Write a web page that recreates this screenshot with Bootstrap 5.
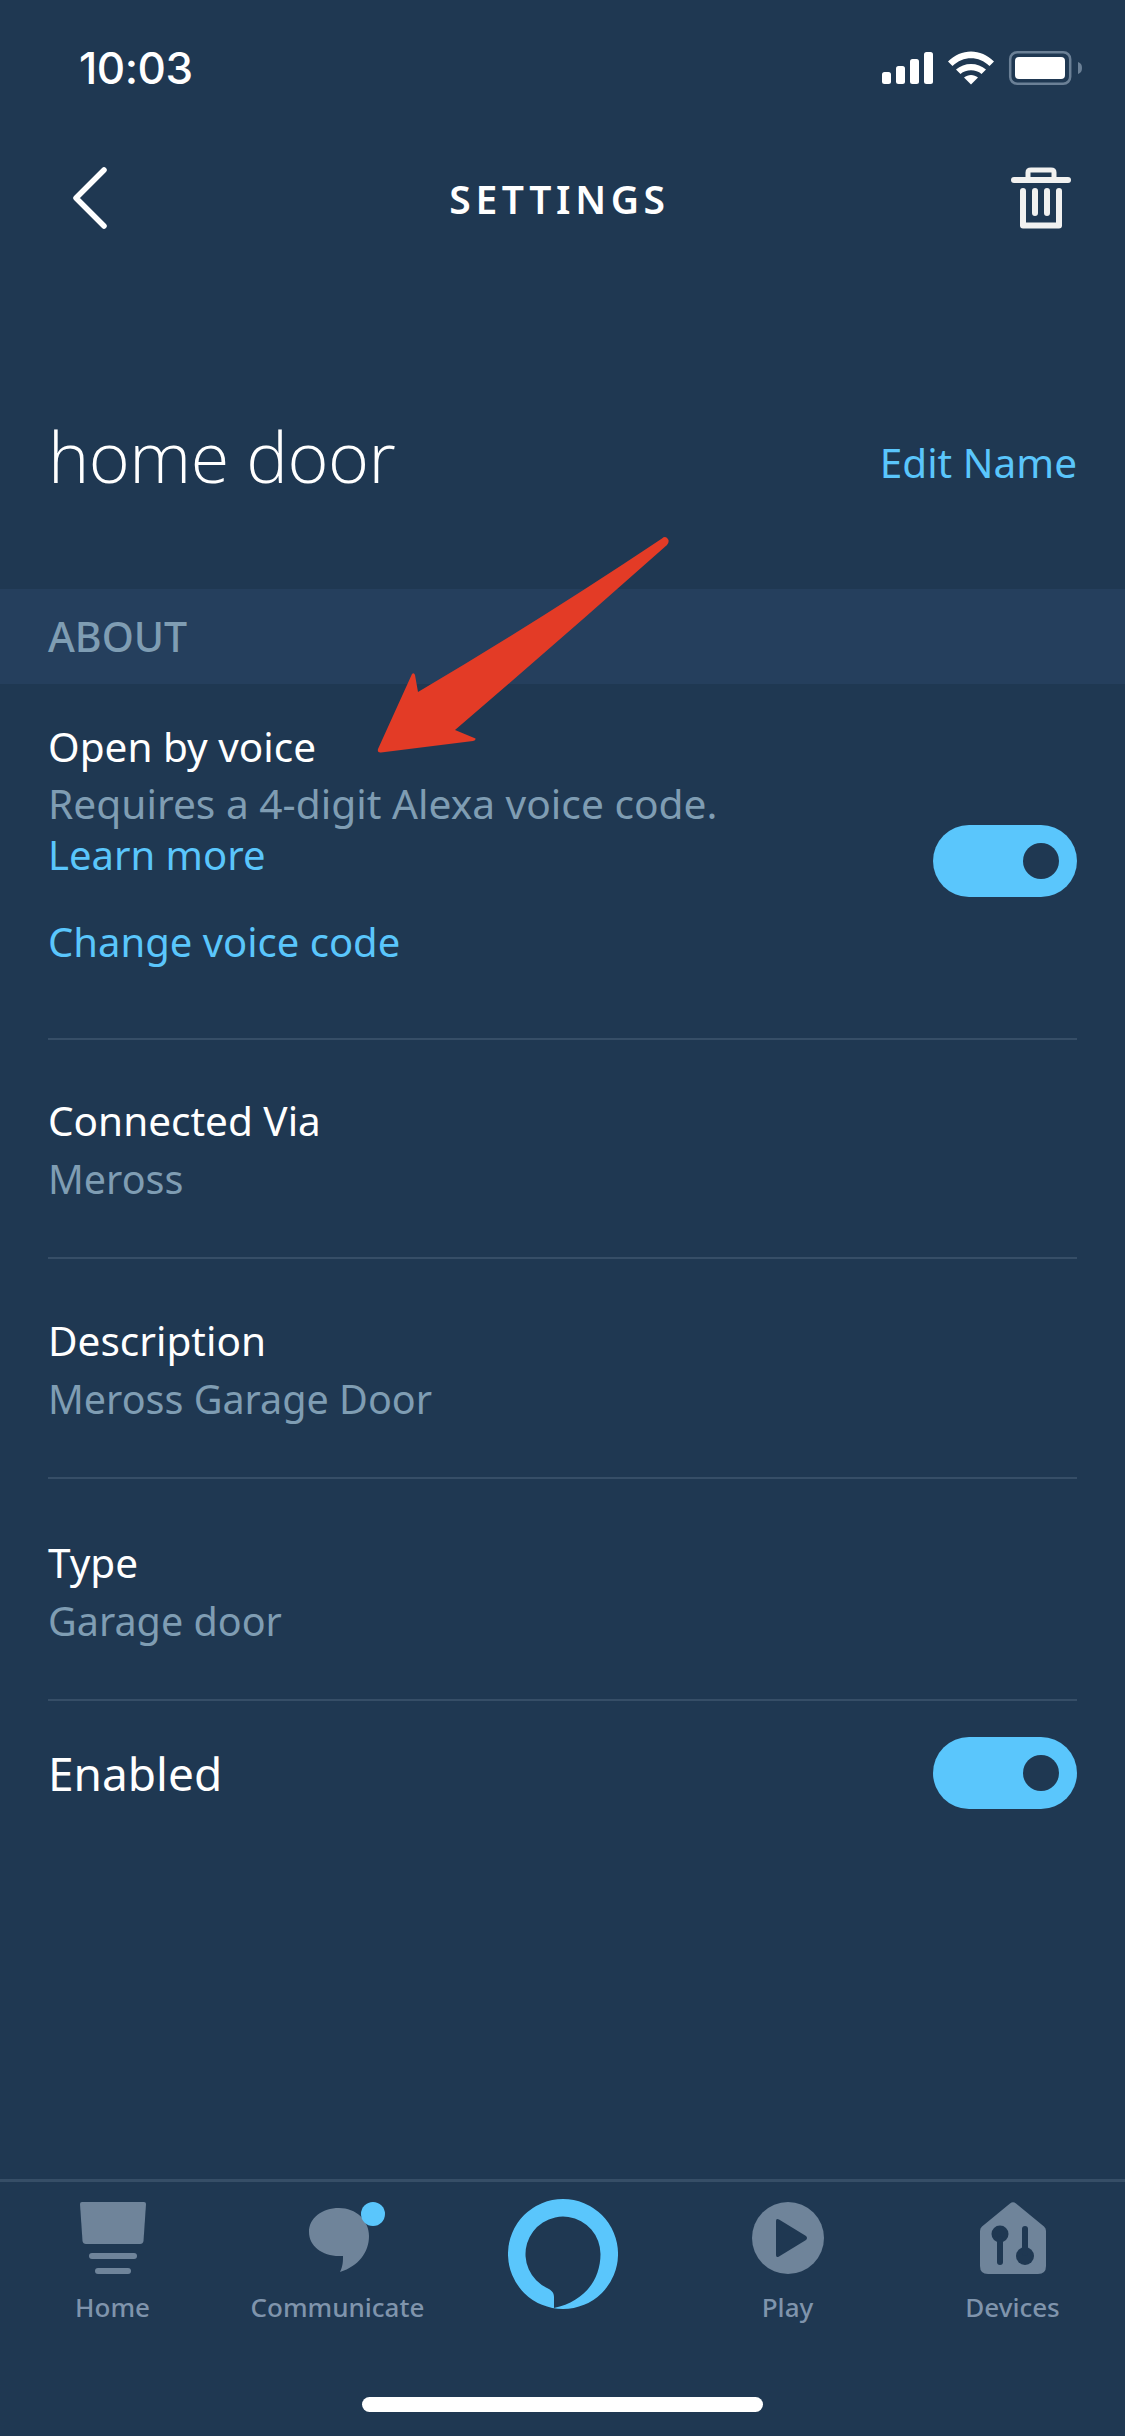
<!DOCTYPE html>
<html lang="en">
<head>
<meta charset="utf-8">
<title>Settings</title>
<link rel="stylesheet" href="https://cdn.jsdelivr.net/npm/bootstrap@5.3.0/dist/css/bootstrap.min.css">
<style>
html,body{margin:0;background:#1f3852}
body{font-family:"Noto Sans","Open Sans",sans-serif;color:#fff}
.phone{width:1125px;height:2436px;background:#1f3852;overflow:hidden}
.status-bar{height:136px;padding:0 42px 0 79px}
.clock{font-family:"Inter","Liberation Sans",sans-serif;font-size:44px;font-weight:500;letter-spacing:-.5px;line-height:1}
.top-nav{height:124px;padding:0 52px 0 70px}
.top-title{font-size:39px;font-weight:600;letter-spacing:4.600px;line-height:1}
.name-row{height:329px;padding:161px 48px 0}
.name-text{font-size:70px;font-weight:300;font-family:"Open Sans","Noto Sans",sans-serif;line-height:1;letter-spacing:-.5px;margin:0}
.accent-link{color:#5ac6fc;text-decoration:none}
.edit-link{font-size:40.500px;line-height:1;margin-top:22px}
.section-band{height:95px;background:#253f5d;padding:0 48px;color:#7f9db3;font-size:41px;font-weight:500}
.set-list{padding:0 48px}
.set-row{border-bottom:2px solid #364e67}
.row-voice{height:356px;padding-top:34px}
.row-connected{height:219px;padding-top:52px}
.row-description{height:220px;padding-top:53px}
.row-type{height:222px;padding-top:55px}
.row-enabled{padding-top:36px}
.main-label{font-size:40.500px;line-height:58px}
.main-label .accent-link{font-size:40px}
.sub-label{font-size:39.500px;line-height:58px;color:#7f9db3}
.voice-sub{font-size:40.700px;line-height:54px}
.voice-learn{line-height:50px}
.voice-change{margin-top:33px}
.enabled-label{font-size:46px}
.toggle-pill{width:144px;height:72px;border-radius:36px;background:#5ac6fc;position:relative;flex:none}
.toggle-pill::after{content:"";position:absolute;width:36px;height:36px;border-radius:50%;background:#1f3852;right:18px;top:18px}
.toggle-voice{margin-top:107px}
.tab-bar{height:257px;border-top:3px solid #364e67}
.tab-label{font-size:26px;font-weight:500;line-height:1;color:#7f94ac;white-space:nowrap}
.tab-icon{height:92px;margin-top:20px}
.tab-icon-large{margin-top:17px}
.tab-icon svg{display:block}
.pointer-arrow{position:absolute;left:370px;top:530px;filter:blur(.7px)}
.home-pill{width:401px;height:15px;border-radius:8px;background:#fff}
</style>
</head>
<body>
<div class="phone d-flex flex-column position-relative">
  <div class="status-bar d-flex align-items-center justify-content-between flex-shrink-0">
    <span class="clock">10:03</span>
    <svg width="203" height="40" viewBox="880 49 203 40" aria-hidden="true">
      <g fill="#fff">
        <rect x="882" y="73" width="9" height="12" rx="2.5"/>
        <rect x="896" y="67" width="9" height="18" rx="2.5"/>
        <rect x="910" y="60" width="9" height="25" rx="2.5"/>
        <rect x="924" y="53" width="9" height="32" rx="2.5"/>
        <path d="M948 62.5C961 49 981 49 994 62.5L989.5 67C979 56.5 963 56.5 952.5 67Z"/>
        <path d="M956 70.5C964 63 978 63 986 70.5L981.5 75C976 70 966 70 960.5 75Z"/>
        <path d="M964 78.5C968 75 974 75 978 78.5L971 85.5Z"/>
        <rect x="1015" y="58" width="50" height="22" rx="4"/>
      </g>
      <rect x="1010.2" y="53.2" width="60" height="31.6" rx="7" fill="none" stroke="#6b8096" stroke-width="2.5"/>
      <path d="M1078 63C1081 64 1082 66 1082 69C1082 72 1081 74 1078 75Z" fill="#6b8096"/>
    </svg>
  </div>

  <div class="top-nav d-flex align-items-center justify-content-between flex-shrink-0">
    <svg width="40" height="64" viewBox="70 166 40 64" aria-hidden="true"><path d="M104 170L76 198L104 226" fill="none" stroke="#fff" stroke-width="5.500" stroke-linecap="round" stroke-linejoin="round"/></svg>
    <span class="top-title">SETTINGS</span>
    <svg width="64" height="66" viewBox="1009 165 64 66" aria-hidden="true" fill="none" stroke="#f1f1f0" stroke-linecap="round" stroke-linejoin="round">
      <path d="M1014 180H1068" stroke-width="6"/>
      <path d="M1028 178V172.5Q1028 170 1031 170H1051Q1054 170 1054 172.5V178" stroke-width="5"/>
      <path d="M1023 191V225.500H1059V191" stroke-width="6"/>
      <path d="M1035 191V213M1047 191V213" stroke-width="6"/>
    </svg>
  </div>

  <div class="name-row d-flex justify-content-between align-items-start flex-shrink-0">
    <h1 class="name-text">home door</h1>
    <a class="accent-link edit-link" href="#">Edit Name</a>
  </div>

  <div class="section-band d-flex align-items-center flex-shrink-0">ABOUT</div>

  <div class="set-list flex-grow-1">
    <div class="set-row row-voice d-flex justify-content-between">
      <div>
        <div class="main-label">Open by voice</div>
        <div class="sub-label voice-sub">Requires a 4-digit Alexa voice code.</div>
        <div class="main-label voice-learn"><a class="accent-link" href="#">Learn more</a></div>
        <div class="main-label voice-change"><a class="accent-link" href="#">Change voice code</a></div>
      </div>
      <div class="toggle-pill toggle-voice"></div>
    </div>
    <div class="set-row row-connected">
      <div class="main-label">Connected Via</div>
      <div class="sub-label">Meross</div>
    </div>
    <div class="set-row row-description">
      <div class="main-label">Description</div>
      <div class="sub-label">Meross Garage Door</div>
    </div>
    <div class="set-row row-type">
      <div class="main-label">Type</div>
      <div class="sub-label">Garage door</div>
    </div>
    <div class="row-enabled d-flex justify-content-between align-items-center">
      <div class="main-label enabled-label">Enabled</div>
      <div class="toggle-pill"></div>
    </div>
  </div>

  <div class="tab-bar flex-shrink-0 d-flex flex-column">
    <div class="row g-0 flex-nowrap">
      <div class="col d-flex flex-column align-items-center">
        <div class="tab-icon"><svg width="66" height="72" viewBox="80 2202 66 72" aria-hidden="true" fill="#6f849a"><path d="M82 2202H144Q146 2202 146 2204L143.500 2241Q143 2244 140 2244H86Q83 2244 82.500 2241L80 2204Q80 2202 82 2202Z"/><rect x="89" y="2253" width="48" height="6" rx="3"/><rect x="95" y="2268" width="36" height="6" rx="3"/></svg></div>
        <span class="tab-label">Home</span>
      </div>
      <div class="col d-flex flex-column align-items-center">
        <div class="tab-icon"><svg width="94" height="72" viewBox="290 2202 94 72" aria-hidden="true"><path fill="#6f849a" d="M338 2208C355 2208 368 2220 368 2236C368 2252 358 2266 339 2272C342 2266 342 2261 342 2256L338 2256C321 2256 308 2246 308 2232C308 2218 321 2208 338 2208Z"/><circle cx="372" cy="2214" r="12" fill="#5ac6fc"/></svg></div>
        <span class="tab-label">Communicate</span>
      </div>
      <div class="col d-flex flex-column align-items-center">
        <div class="tab-icon tab-icon-large"><svg width="110" height="110" viewBox="0 0 110 110" aria-hidden="true"><path fill="#5ac6fc" fill-rule="evenodd" d="M55 0A55 55 0 1 1 55 110A55 55 0 1 1 55 0ZM46 109C75 103 92.500 82 92.500 55A37.500 37.500 0 1 0 39 89C43 91 46 93 46 98Z"/></svg></div>
      </div>
      <div class="col d-flex flex-column align-items-center">
        <div class="tab-icon"><svg width="72" height="72" viewBox="752 2202 72 72" aria-hidden="true"><circle cx="788" cy="2238" r="36" fill="#6f849a"/><path fill="#1f3852" d="M776 2221Q776 2218 779 2219.500L806 2236Q808 2238 806 2240L779 2256.500Q776 2258 776 2255Z"/></svg></div>
        <span class="tab-label">Play</span>
      </div>
      <div class="col d-flex flex-column align-items-center">
        <div class="tab-icon"><svg width="66" height="72" viewBox="980 2202 66 72" aria-hidden="true"><path fill="#6f849a" d="M1010 2203.500Q1013 2201 1016 2203.500L1044 2226.500Q1046 2228 1046 2231V2266Q1046 2274 1038 2274H988Q980 2274 980 2266V2231Q980 2228 982 2226.500Z"/><g fill="#1f3852"><circle cx="1000" cy="2234" r="8.500"/><rect x="997" y="2236" width="6" height="29" rx="3"/><circle cx="1025" cy="2256" r="9"/><rect x="1022" y="2226" width="6" height="30" rx="3"/></g></svg></div>
        <span class="tab-label">Devices</span>
      </div>
    </div>
    <div class="home-pill mx-auto mt-auto mb-4"></div>
  </div>

  <svg class="pointer-arrow" width="305" height="230" viewBox="370 530 305 230" aria-hidden="true"><path fill="#e33b26" d="M662 538.500Q666 535 668.500 540Q669 543 667 545Q560 640 455 730L475.500 738.500Q476 740 473 741L381 752.500Q377 753 378 749L412 674Q414 672 415 675L418 692Q540 620 662 538.500Z"/></svg>
</div>
</body>
</html>
